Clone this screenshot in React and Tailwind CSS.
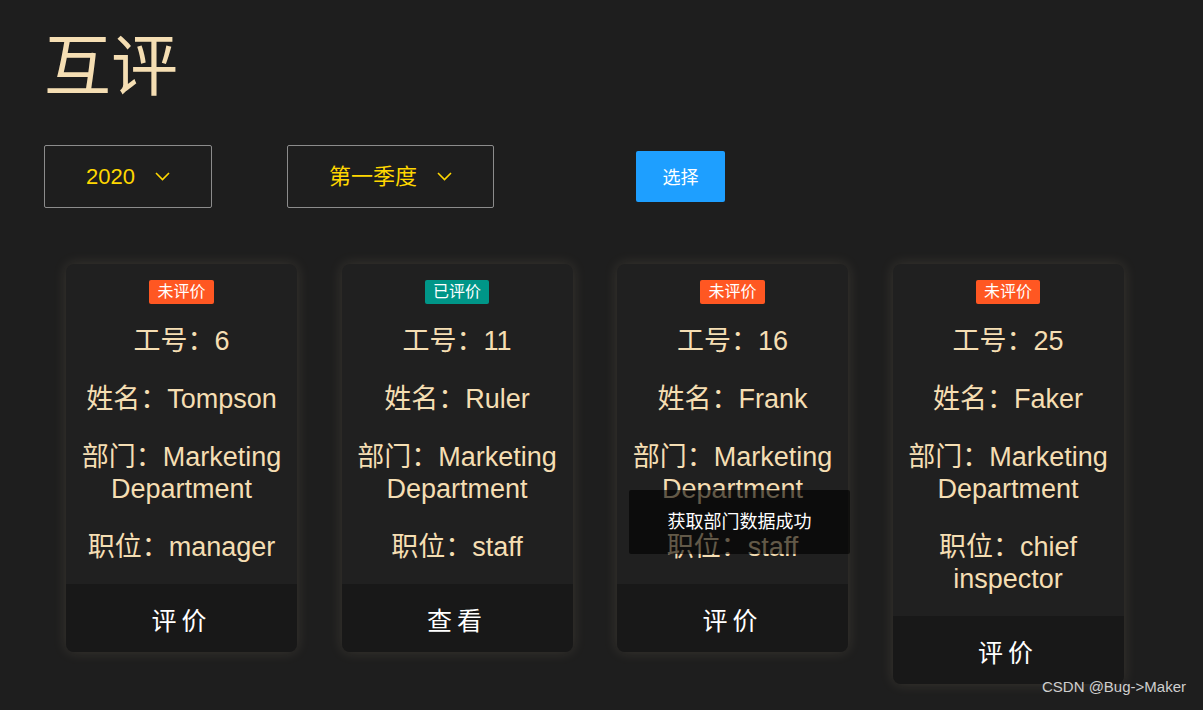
import React from 'react';

const people = [
  { id: 6, name: 'Tompson', dept: 'Marketing Department', title: 'manager', done: false },
  { id: 11, name: 'Ruler', dept: 'Marketing Department', title: 'staff', done: true },
  { id: 16, name: 'Frank', dept: 'Marketing Department', title: 'staff', done: false },
  { id: 25, name: 'Faker', dept: 'Marketing Department', title: 'chief inspector', done: false },
];

const font = { fontFamily: '"Liberation Sans", "Noto Sans CJK SC", sans-serif' };

const Chevron = () => (
  <svg width="15" height="9" viewBox="0 0 15 9" fill="none" stroke="#ffd700" strokeWidth="1.6">
    <polyline points="1,1 7.5,7.5 14,1" />
  </svg>
);

const Select = ({ label, width }) => (
  <div
    className={`flex items-center justify-center h-[63px] border border-[#8c8c8c] rounded-[2px] text-[22px] text-[#ffd700] ${width}`}
  >
    <span>{label}</span>
    <span className="ml-[20px]"><Chevron /></span>
  </div>
);

const Card = ({ person }) => (
  <div className="w-[231px] rounded-lg overflow-hidden bg-[#202020] shadow-[0_0_14px_rgba(245,222,179,0.13)]">
    <div className="flex flex-col items-center px-3 pt-4 pb-[21px] text-center">
      <span
        className={`h-6 px-2 text-[16px] leading-6 text-white rounded-[2px] ${
          person.done ? 'bg-[#009688]' : 'bg-[#ff5722]'
        }`}
      >
        {person.done ? '已评价' : '未评价'}
      </span>
      <div className="mt-[21px] flex flex-col gap-[26px] text-[27px] leading-8 text-[#f5deb3]">
        <p>工号：{person.id}</p>
        <p>姓名：{person.name}</p>
        <p>部门：{person.dept}</p>
        <p>职位：{person.title}</p>
      </div>
    </div>
    <div className="h-[68px] pt-[7px] flex items-center justify-center bg-[#181818] text-[25px] tracking-[5px] text-white">
      {person.done ? '查看' : '评价'}
    </div>
  </div>
);

export default function App() {
  return (
    <div className="relative h-[710px] overflow-hidden bg-[#1e1e1e] pl-[44px] pt-[33px]" style={font}>
      <h1 className="text-[67px] leading-none text-[#f5deb3]">互评</h1>

      <div className="mt-[45px] flex items-start">
        <Select label="2020" width="w-[168px]" />
        <div className="ml-[75px]">
          <Select label="第一季度" width="w-[207px]" />
        </div>
        <button className="ml-[142px] mt-[6px] w-[89px] h-[51px] pt-[4px] rounded-[2px] bg-[#1e9fff] text-[18px] text-white">
          选择
        </button>
      </div>

      <div className="mt-[56px] ml-[22px] flex items-start gap-[44.5px]">
        {people.map((p) => (
          <Card key={p.id} person={p} />
        ))}
      </div>

      <div className="absolute left-[629px] top-[490px] w-[221px] h-[64px] flex items-center justify-center rounded-[2px] bg-black/60 text-[18px] text-white">
        获取部门数据成功
      </div>

      <div className="absolute right-[17px] bottom-[12px] text-[15px] text-[#cfcfcf]">
        CSDN @Bug-&gt;Maker
      </div>
    </div>
  );
}
